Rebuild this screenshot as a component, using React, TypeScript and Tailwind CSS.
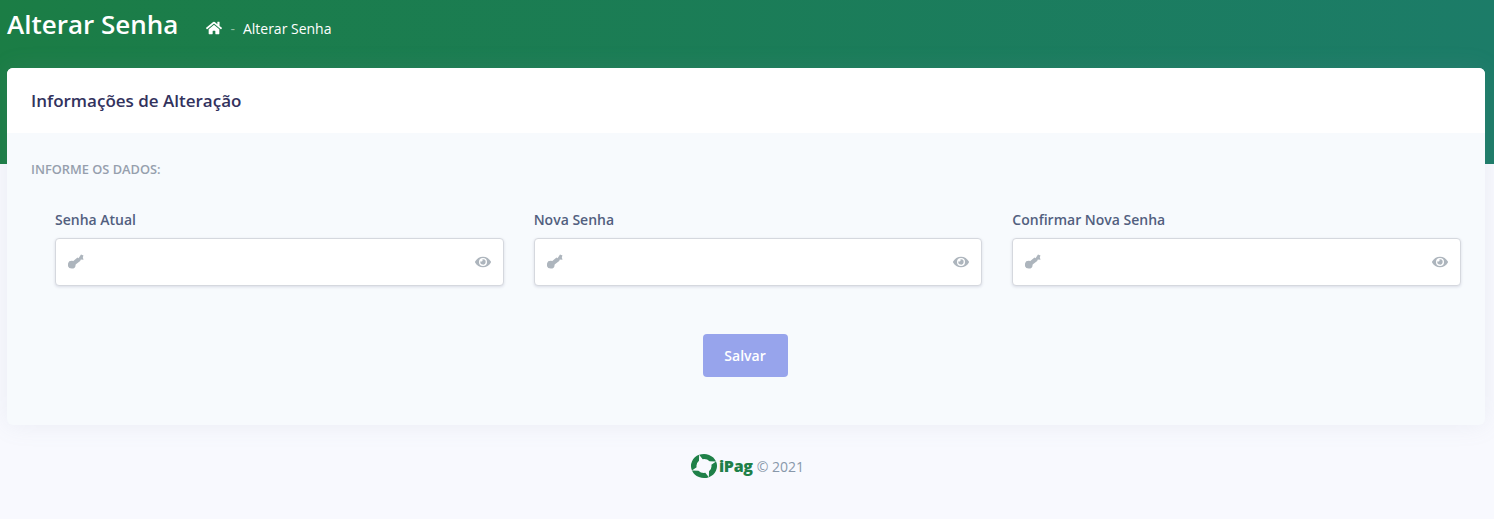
import React from 'react';
import { FaHome, FaEye } from 'react-icons/fa';

const fields = ['Senha Atual', 'Nova Senha', 'Confirmar Nova Senha'];

const KeyIcon = () => (
  <svg width="16" height="16" viewBox="0 0 16 16" fill="#adb5bd" className="shrink-0">
    <circle cx="3.700" cy="10.700" r="3.900" />
    <path d="M5 7.300 L9.500 3.500 L10.500 4.300 L13 0.500 L15.500 1.500 L14.800 3.300 L15.500 5.800 L12.800 5.500 L12.200 7 L7.300 10.700 Z" />
  </svg>
);

const PasswordField = ({ label }: { label: string }) => (
  <div>
    <label className="block text-[14px] leading-[21px] font-semibold text-[#525f7f] mb-2">{label}</label>
    <div className="h-[48px] bg-white rounded-[4px] border border-[#d5d8de] shadow-[0_1px_3px_rgba(50,50,93,0.15)] flex items-center justify-between pl-3 pr-[12px]">
      <KeyIcon />
      <FaEye size={16} className="text-[#adb5bd]" />
    </div>
  </div>
);

const blade = 'M9.130 1.950 A13 13 0 0 1 26.050 9.130 L19.570 8.980 A7.500 7.500 0 0 0 12.700 6.600 Z';

const Logo = () => (
  <svg width="28" height="26" viewBox="0 0 28 28" preserveAspectRatio="none" className="shrink-0">
    <g fill="#1f8048">
      <path d={blade} />
      <path d={blade} transform="rotate(90 14 14)" />
      <path d={blade} transform="rotate(180 14 14)" />
      <path d={blade} transform="rotate(270 14 14)" />
    </g>
  </svg>
);

export default function App() {
  return (
    <div className="min-h-[519px] bg-[#f8f9fe] font-['Open_Sans',sans-serif]">
      <header className="h-[164px] bg-gradient-to-r from-[#1b7d45] to-[#1c7c68] pl-[7px] pr-[9px] pt-[5px]">
        <div className="flex items-start">
          <h1 className="text-[26px] leading-[38px] font-semibold text-white">Alterar Senha</h1>
          <nav className="flex items-center ml-[28px] mt-[4px] h-[38px] text-[14px] text-white">
            <FaHome size={16} />
            <span className="ml-[8px] mr-[8px] text-[#8fbfa3]">-</span>
            <span>Alterar Senha</span>
          </nav>
        </div>
      </header>

      <main className="pl-[7px] pr-[9px] -mt-[96px]">
        <section className="rounded-[6px] overflow-hidden bg-[#f7fafd] shadow-[0_0_24px_rgba(136,152,170,0.12)]">
          <div className="h-[65px] bg-white px-6 flex items-center">
            <h2 className="text-[17px] font-semibold text-[#32325d]">Informações de Alteração</h2>
          </div>
          <div className="h-[292px] px-6 pt-[27px]">
            <h3 className="text-[12.800px] leading-[18px] font-semibold text-[#969fad] uppercase">Informe os dados:</h3>
            <div className="grid grid-cols-3 gap-[30px] pl-6 mt-[31px]">
              {fields.map((f) => (
                <PasswordField key={f} label={f} />
              ))}
            </div>
            <div className="flex justify-center mt-[48px]">
              <button className="w-[85px] h-[43px] mr-[2px] rounded-[4px] bg-[#97a4ec] text-white text-[14px] font-semibold">
                Salvar
              </button>
            </div>
          </div>
        </section>
      </main>

      <footer className="flex items-center justify-center mt-[27px] h-[28px] text-[14px] text-[#8898aa]">
        <Logo />
        <span className="ml-[1px] text-[16px] font-extrabold tracking-[-0.3px] text-[#1f8048]">iPag</span>
        <span className="ml-[4px]">© 2021</span>
      </footer>
    </div>
  );
}
